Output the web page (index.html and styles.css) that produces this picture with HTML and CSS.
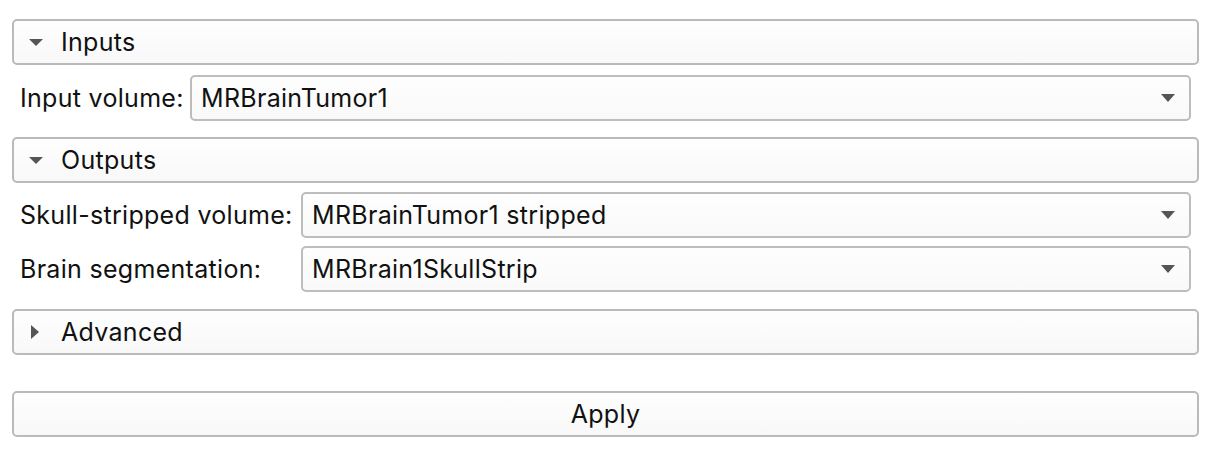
FILE: index.html
```html
<!DOCTYPE html>
<html lang="en">
<head>
    <meta charset="UTF-8">
    <title>Skull Stripper</title>
    <link rel="stylesheet" href="styles.css">
</head>
<body>

    <div class="panel">
        <div class="section-header">
            <span class="arrow-down"></span>
            <span>Inputs</span>
        </div>

        <div class="form inputs-form">
            <label>Input volume:</label>
            <div class="combo">
                <span>MRBrainTumor1</span>
                <span class="combo-arrow"></span>
            </div>
        </div>

        <div class="section-header">
            <span class="arrow-down"></span>
            <span>Outputs</span>
        </div>

        <div class="form outputs-form">
            <label>Skull-stripped volume:</label>
            <div class="combo">
                <span>MRBrainTumor1 stripped</span>
                <span class="combo-arrow"></span>
            </div>

            <label>Brain segmentation:</label>
            <div class="combo">
                <span>MRBrain1SkullStrip</span>
                <span class="combo-arrow"></span>
            </div>
        </div>

        <div class="section-header collapsed">
            <span class="arrow-right"></span>
            <span>Advanced</span>
        </div>

        <button class="apply">Apply</button>
    </div>

</body>
</html>
```

FILE: styles.css
```css
body {
    font-family: Inter, "Liberation Sans", Arial, sans-serif;
    font-size: 25px;
    letter-spacing: 0.3px;
    color: #111;
    background: #fff;
    margin: 0;
    padding: 19px 15px 0 12px;
}
.panel {
    display: flex;
    flex-direction: column;
}
.section-header {
    display: flex;
    align-items: center;
    height: 46px;
    box-sizing: border-box;
    border: 2px solid #bababa;
    border-radius: 5px;
    background: linear-gradient(#fefefe, #f8f8f8);
    padding-left: 15px;
    margin-bottom: 10px;
}
.section-header.collapsed {
    margin-bottom: 36px;
}
.arrow-down {
    width: 0;
    height: 0;
    border-left: 7px solid transparent;
    border-right: 7px solid transparent;
    border-top: 7px solid #555;
    margin-right: 18px;
}
.arrow-right {
    width: 0;
    height: 0;
    border-top: 7px solid transparent;
    border-bottom: 7px solid transparent;
    border-left: 8px solid #555;
    margin-left: 2px;
    margin-right: 22px;
}
.form {
    display: grid;
    align-items: center;
    row-gap: 8px;
    padding: 0 8px;
}
.inputs-form {
    grid-template-columns: 170px 1fr;
    margin-bottom: 16px;
}
.outputs-form {
    grid-template-columns: 281px 1fr;
    margin-top: -1px;
    margin-bottom: 17px;
}
label {
    white-space: nowrap;
}
.combo {
    display: flex;
    align-items: center;
    justify-content: space-between;
    height: 46px;
    box-sizing: border-box;
    border: 2px solid #bdbdbd;
    border-radius: 5px;
    background: linear-gradient(#fefefe, #f9f9f9);
    padding: 0 14px 0 9px;
}
.combo-arrow {
    width: 0;
    height: 0;
    border-left: 7px solid transparent;
    border-right: 7px solid transparent;
    border-top: 8px solid #555;
}
.apply {
    height: 46px;
    box-sizing: border-box;
    border: 2px solid #bababa;
    border-radius: 5px;
    background: linear-gradient(#fefefe, #f8f8f8);
    font-family: inherit;
    font-size: 25px;
    letter-spacing: 0.3px;
    color: #111;
    padding: 0;
}
```
